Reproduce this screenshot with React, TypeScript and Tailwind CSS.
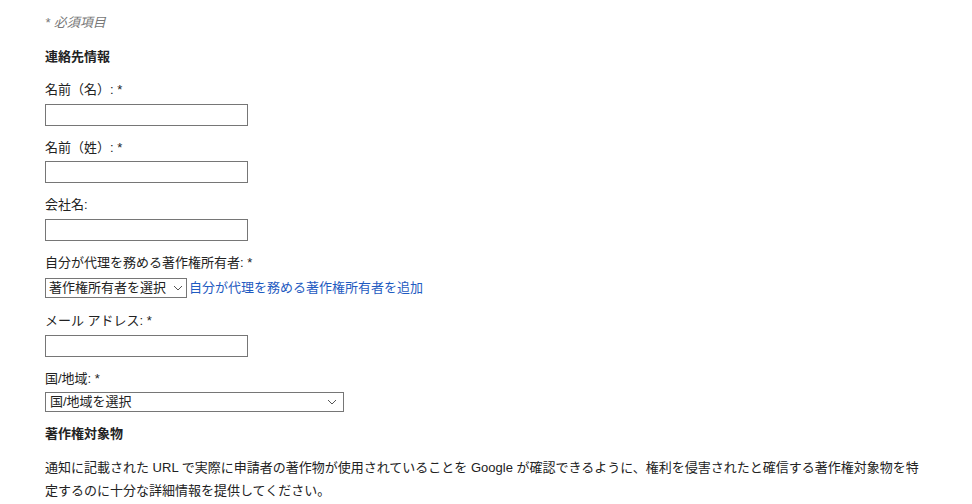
import React from "react";

const font = { fontFamily: '"Liberation Sans", "Noto Sans CJK JP", Arial, sans-serif' };

function TextInput() {
  return (
    <input
      type="text"
      className="block w-[203px] h-[22px] border border-[#767676] bg-white px-1 text-[13px] outline-none"
    />
  );
}

function Chevron() {
  return (
    <svg width="10" height="6" viewBox="0 0 10 6" className="shrink-0">
      <path d="M1 1 L5 5 L9 1" fill="none" stroke="#555" strokeWidth="1" />
    </svg>
  );
}

export default function App() {
  return (
    <div className="min-h-[504px] w-[972px] bg-white text-[13px] text-[#222]" style={font}>
      <div className="pl-[45px] pt-[13px] w-[930px]">
        <div className="h-[20px] leading-[20px] italic text-[#777] text-[13px]">* 必須項目</div>
        <div className="mt-[14px] h-[20px] leading-[20px] font-bold">連絡先情報</div>

        <div className="mt-[13px] h-[20px] leading-[20px]">名前（名）: *</div>
        <div className="mt-[4px]"><TextInput /></div>

        <div className="mt-[12px] h-[20px] leading-[20px]">名前（姓）: *</div>
        <div className="mt-[3px]"><TextInput /></div>

        <div className="mt-[12px] h-[20px] leading-[20px]">会社名:</div>
        <div className="mt-[4px]"><TextInput /></div>

        <div className="mt-[12px] h-[20px] leading-[20px]">自分が代理を務める著作権所有者: *</div>
        <div className="mt-[5px] flex items-center h-[20px]">
          <div className="flex items-center justify-between w-[142px] h-[20px] border border-[#767676] bg-white pl-[3px] pr-[3px]">
            <span className="leading-[18px]">著作権所有者を選択</span>
            <Chevron />
          </div>
          <a className="ml-[2px] text-[#1f5bc1] leading-[20px] cursor-pointer">自分が代理を務める著作権所有者を追加</a>
        </div>

        <div className="mt-[13px] h-[20px] leading-[20px]">メール アドレス: *</div>
        <div className="mt-[4px]"><TextInput /></div>

        <div className="mt-[12px] h-[20px] leading-[20px]">国/地域: *</div>
        <div className="mt-[3px] flex items-center justify-between w-[299px] h-[20px] border border-[#767676] bg-white pl-[4px] pr-[6px]">
          <span className="leading-[18px]">国/地域を選択</span>
          <Chevron />
        </div>

        <div className="mt-[12px] h-[20px] leading-[20px] font-bold">著作権対象物</div>
        <p className="mt-[12px] leading-[23px] w-[880px]">
          通知に記載された URL で実際に申請者の著作物が使用されていることを Google が確認できるように、権利を侵害されたと確信する著作権対象物を特定するのに十分な詳細情報を提供してください。
        </p>
      </div>
    </div>
  );
}
